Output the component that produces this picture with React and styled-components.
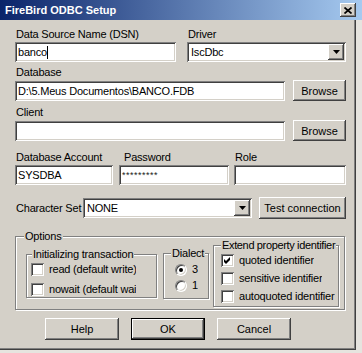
import React from 'react'
import styled, { createGlobalStyle, css } from 'styled-components'

const GlobalStyle = createGlobalStyle`
  html, body { margin: 0; padding: 0; }
  body {
    background: #e6e4df;
    font-family: "Liberation Sans", Arial, sans-serif;
    font-size: 11px;
    color: #000;
  }
`

const raised = css`
  background: #d4d0c8;
  box-shadow: inset -1px -1px #404040, inset 1px 1px #ffffff,
    inset -2px -2px #808080, inset 2px 2px #d4d0c8;
`
const sunken = css`
  background: #fff;
  box-shadow: inset 1px 1px #808080, inset -1px -1px #ffffff,
    inset 2px 2px #404040, inset -2px -2px #d4d0c8;
`

const Window = styled.div`
  width: 362px;
  height: 353px;
  display: flex;
  flex-direction: column;
  overflow: hidden;
`
const TitleBar = styled.div`
  flex: none;
  height: 20px;
  box-sizing: border-box;
  padding: 0 6px 0 5px;
  display: flex;
  align-items: center;
  justify-content: space-between;
  background: linear-gradient(90deg, #0a246a 0%, #a6caf0 100%);
`
const TitleText = styled.span`
  color: #fff;
  font-weight: bold;
  font-size: 11px;
`
const CloseButton = styled.div`
  width: 16px;
  height: 14px;
  ${raised};
  display: flex;
  align-items: center;
  justify-content: center;
`
const Body = styled.div`
  flex: none;
  width: 356px;
  height: 330px;
  box-sizing: border-box;
  background: #d4d0c8;
  border-right: 1px solid #404040;
  border-bottom: 1px solid #404040;
  box-shadow: inset -1px -1px #808080;
  padding: 6px 9px 0 15px;
  display: flex;
  flex-direction: column;
  letter-spacing: -0.2px;
`
const Row = styled.div`
  display: flex;
  align-items: ${p => p.$align || 'flex-end'};
  gap: ${p => p.$gap || 0}px;
  margin-top: ${p => p.$mt || 0}px;
  padding-left: ${p => p.$pl || 0}px;
`
const Field = styled.div`
  display: flex;
  flex-direction: column;
  width: ${p => (p.$w ? `${p.$w}px` : 'auto')};
  margin-top: ${p => p.$mt || 0}px;
  margin-left: ${p => p.$ml || 0}px;
`
const Label = styled.div`
  height: 16px;
  line-height: 16px;
  padding-left: ${p => p.$indent ?? 1}px;
  white-space: nowrap;
  width: ${p => (p.$w ? `${p.$w}px` : 'auto')};
  flex: none;
`
const TextBox = styled.div`
  ${sunken};
  height: 20px;
  box-sizing: border-box;
  padding: 0 3px;
  line-height: 20px;
  white-space: nowrap;
  overflow: hidden;
  flex: ${p => (p.$grow ? 1 : 'none')};
  display: flex;
  align-items: center;
`
const Caret = styled.span`
  display: inline-block;
  width: 1px;
  height: 13px;
  background: #000;
`
const Secret = styled.span`
  font-size: 9px;
  letter-spacing: 0.5px;
  color: #202020;
`
const Combo = styled.div`
  ${sunken};
  height: 20px;
  width: ${p => (p.$w ? `${p.$w}px` : '100%')};
  box-sizing: border-box;
  padding: 2px;
  display: flex;
  align-items: stretch;
`
const ComboText = styled.div`
  flex: 1;
  padding-left: 2px;
  line-height: 16px;
`
const DropButton = styled.div`
  width: 16px;
  ${raised};
  display: flex;
  align-items: center;
  justify-content: center;
`
const Spacer = styled.div`
  width: ${p => p.$w}px;
  flex: none;
`
const Button = styled.div`
  ${raised};
  width: ${p => p.$w}px;
  height: ${p => p.$h || 22}px;
  box-sizing: border-box;
  flex: none;
  display: flex;
  align-items: center;
  justify-content: center;
  letter-spacing: 0;
  ${p =>
    p.$default &&
    css`
      border: 1px solid #000;
    `}
`
const GroupBox = styled.fieldset`
  margin: ${p => p.$mt || 0}px 0 0 ${p => p.$ml || 0}px;
  padding: ${p => p.$pad};
  width: ${p => (p.$w ? `${p.$w}px` : 'auto')};
  min-inline-size: 0;
  box-sizing: border-box;
  border: 1px solid #808080;
  box-shadow: inset 1px 1px #ffffff, 1px 1px #ffffff;
  flex: none;
  display: flex;
  flex-direction: ${p => p.$dir || 'column'};
  align-items: flex-start;
  gap: ${p => p.$gap || 0}px;
`
const Legend = styled.legend`
  margin-left: ${p => p.$ml ?? 0}px;
  padding: 0 1px;
  line-height: 13px;
  background: #d4d0c8;
  white-space: nowrap;
  letter-spacing: ${p => p.$tight ? '-0.35px' : '-0.2px'};
`
const CheckRow = styled.div`
  display: flex;
  align-items: center;
  gap: 5px;
  height: 13px;
`
const CheckBox = styled.div`
  ${sunken};
  width: 13px;
  height: 13px;
  flex: none;
  display: flex;
`
const Radio = styled.div`
  width: 12px;
  height: 12px;
  box-sizing: border-box;
  flex: none;
  border-radius: 50%;
  background: #fff;
  border: 1px solid;
  border-color: #808080 #ffffff #ffffff #808080;
  box-shadow: inset 1px 1px #404040, inset -1px -1px #d4d0c8;
  display: flex;
  align-items: center;
  justify-content: center;
  &::after {
    content: '';
    width: 4px;
    height: 4px;
    border-radius: 50%;
    background: ${p => (p.$on ? '#000' : 'transparent')};
  }
`
const ItemText = styled.span`
  white-space: nowrap;
  overflow: hidden;
  width: ${p => (p.$w ? `${p.$w}px` : 'auto')};
  line-height: 13px;
`

const Check = ({ on }) => (
  <CheckBox>
    {on && (
      <svg width="13" height="13" viewBox="0 0 13 13">
        <polygon points="3,5 5,7 9,3 9,6 5,10 3,8" fill="#000" />
      </svg>
    )}
  </CheckBox>
)

const Arrow = () => (
  <svg width="7" height="4" viewBox="0 0 7 4">
    <polygon points="0,0 7,0 3.5,4" fill="#000" />
  </svg>
)

export default function App() {
  return (
    <>
      <GlobalStyle />
      <Window>
        <TitleBar>
          <TitleText>FireBird ODBC Setup</TitleText>
          <CloseButton>
            <svg width="8" height="7" viewBox="0 0 8 7">
              <path d="M0.5 0.5 L7.5 6.5 M7.5 0.5 L0.5 6.5" stroke="#000" strokeWidth="1.7" />
            </svg>
          </CloseButton>
        </TitleBar>
        <Body>
          <Row $gap={11}>
            <Field $w={161}>
              <Label>Data Source Name (DSN)</Label>
              <TextBox>banco<Caret /></TextBox>
            </Field>
            <Field $w={159}>
              <Label>Driver</Label>
              <Combo>
                <ComboText>IscDbc</ComboText>
                <DropButton><Arrow /></DropButton>
              </Combo>
            </Field>
          </Row>

          <Field $mt={2}>
            <Label>Database</Label>
            <Row $gap={8}>
              <TextBox $grow>D:\5.Meus Documentos\BANCO.FDB</TextBox>
              <Button $w={53} $h={21}>Browse</Button>
            </Row>
          </Field>

          <Field $mt={3}>
            <Label>Client</Label>
            <Row $gap={8}>
              <TextBox $grow />
              <Button $w={53} $h={21}>Browse</Button>
            </Row>
          </Field>

          <Row $mt={8} $align="flex-start">
            <Field $w={98}>
              <Label>Database Account</Label>
              <TextBox>SYSDBA</TextBox>
            </Field>
            <Field $w={110} $ml={6}>
              <Label $indent={5}>Password</Label>
              <TextBox><Secret>*********</Secret></TextBox>
            </Field>
            <Field $w={112} $ml={5}>
              <Label>Role</Label>
              <TextBox />
            </Field>
          </Row>

          <Row $mt={12} $align="center">
            <Label $w={67}>Character Set</Label>
            <Combo $w={170}>
              <ComboText>NONE</ComboText>
              <DropButton><Arrow /></DropButton>
            </Combo>
            <Spacer $w={7} />
            <Button $w={87}>Test connection</Button>
          </Row>

          <GroupBox $mt={11} $dir="row" $pad="0 4px 2px 10px" $w={330}>
            <Legend $ml={-2}>Options</Legend>
            <GroupBox $mt={5} $w={131} $pad="2px 4px 1px 4px" $gap={7}>
              <Legend $ml={1}>Initializing transaction</Legend>
              <CheckRow>
                <Check />
                <ItemText $w={87}>read (default write)</ItemText>
              </CheckRow>
              <CheckRow>
                <Check />
                <ItemText $w={87}>nowait (default wait)</ItemText>
              </CheckRow>
            </GroupBox>
            <GroupBox $mt={4} $ml={6} $w={46} $pad="3px 2px 6px 11px" $gap={3}>
              <Legend $ml={-4}>Dialect</Legend>
              <CheckRow>
                <Radio $on />
                <ItemText>3</ItemText>
              </CheckRow>
              <CheckRow>
                <Radio />
                <ItemText>1</ItemText>
              </CheckRow>
            </GroupBox>
            <GroupBox $mt={-4} $ml={4} $w={126} $pad="2px 2px 3px 7px" $gap={5}>
              <Legend $ml={0} $tight>Extend property identifier</Legend>
              <CheckRow>
                <Check on />
                <ItemText>quoted identifier</ItemText>
              </CheckRow>
              <CheckRow>
                <Check />
                <ItemText>sensitive identifier</ItemText>
              </CheckRow>
              <CheckRow>
                <Check />
                <ItemText>autoquoted identifier</ItemText>
              </CheckRow>
            </GroupBox>
          </GroupBox>

          <Row $mt={8} $gap={12} $pl={30}>
            <Button $w={74}>Help</Button>
            <Button $w={74} $default>OK</Button>
            <Button $w={74}>Cancel</Button>
          </Row>
        </Body>
      </Window>
    </>
  )
}
